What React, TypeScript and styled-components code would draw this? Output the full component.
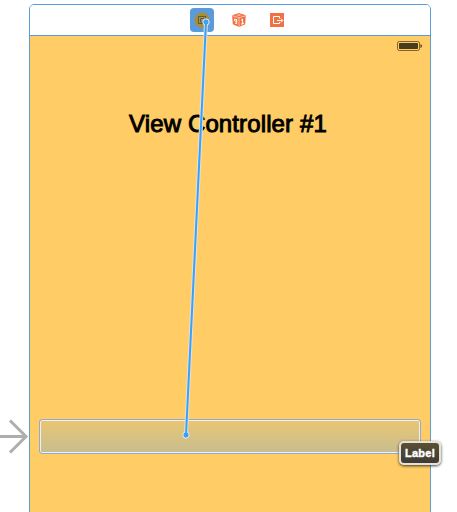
import React from "react";
import styled, { createGlobalStyle } from "styled-components";

const Global = createGlobalStyle`
  * { box-sizing: border-box; }
  body { margin: 0; background: #fff; overflow: hidden; }
`;

const Canvas = styled.main`
  position: relative;
  width: 457px;
  height: 512px;
  padding: 4px 26px 0 29px;
  overflow: hidden;
  background: #fff;
  font-family: "Liberation Sans", Arial, sans-serif;
`;

const Scene = styled.section`
  display: flex;
  flex-direction: column;
  width: 402px;
  height: 520px;
  border: 1px solid #5a9bdc;
  border-radius: 5px 5px 0 0;
  overflow: hidden;
`;

const Dock = styled.header`
  display: flex;
  flex: none;
  gap: 13px;
  height: 31px;
  padding: 3px 0 0 160px;
  border-bottom: 1px solid #5a9bdc;
  background: #fff;
`;

const DockItem = styled.div<{ $selected?: boolean }>`
  display: grid;
  place-items: center;
  width: 24px;
  height: 24px;
  border-radius: 4px;
  background: ${(p) => (p.$selected ? "#5a9bdc" : "transparent")};

  &:last-child { margin-left: 1px; }
`;

const Screen = styled.div`
  display: flex;
  flex: 1;
  flex-direction: column;
  background: #ffcc66;
`;

const StatusBar = styled.div`
  display: flex;
  justify-content: flex-end;
  height: 20px;
  padding: 5px 7px 0 0;
`;

const Title = styled.h1`
  margin: 54px 0 0;
  padding-right: 4px;
  height: 28px;
  font-size: 24px;
  line-height: 28px;
  font-weight: 400;
  letter-spacing: 0.12px;
  text-align: center;
  white-space: nowrap;
  color: #000;
  -webkit-text-stroke: 0.95px #000;
`;

const DropTarget = styled.div`
  height: 35px;
  margin: 281px 9px 0;
  border: 1px solid #8faadb;
  border-radius: 3px;
  background: linear-gradient(#eac671, #c7bd91);
  box-shadow: inset 0 0 0 1px #f2f0eb;
`;

const Overlay = styled.svg`
  position: absolute;
  inset: 0;
`;

const Tooltip = styled.div`
  position: absolute;
  left: 399px;
  top: 441px;
  display: grid;
  place-items: center;
  width: 42px;
  height: 24px;
  border: 2px solid #e6e1d8;
  border-radius: 5px;
  background: linear-gradient(#5b5034, #3f3b35);
  box-shadow: 0 1px 3px rgba(0, 0, 0, 0.75);
  color: #fff;
  font-size: 11px;
  line-height: 14px;
  font-weight: 700;
  letter-spacing: 0.3px;
  -webkit-text-stroke: 0.4px #fff;
`;

const ControllerIcon = () => (
  <svg width="16" height="16" viewBox="0 0 16 16">
    <circle cx="8" cy="8" r="7.5" fill="#ad8d32" />
    <path d="M4.5 4.5H11.5V11.5H4.5Z" fill="#a4975b" stroke="#625b36" strokeWidth="1.1" />
    <path d="M6.5 6.5H10V10H6.5Z" fill="#8795a0" stroke="#625b36" />
  </svg>
);

const ResponderIcon = () => (
  <svg width="16" height="16" viewBox="0 0 16 16">
    <path d="M8 1L14.8 3.2L14.2 12.3L8 15L1.8 12.3L1.1 3.2Z" fill="#f37043" />
    <path d="M1.2 3.7L8 5.7L14.8 3.7M8 5.7V15" fill="none" stroke="#ffe4db" strokeWidth=".7" />
    <path d="M5.2 3.1L8 2.3L10.8 3.1L8 3.9Z" fill="#ffc1aa" />
    <path d="M5.7 7.5L3.7 7V9L5.7 9.5M5.7 7.2V11.7L4 11.1" fill="none" stroke="#fff" />
    <path d="M10.1 8.2L11.5 7.4V11.8M10.1 12.2L12.8 11.3" fill="none" stroke="#fff" strokeWidth="1.1" />
  </svg>
);

const ExitIcon = () => (
  <svg width="14" height="14" viewBox="0 0 14 14">
    <path d="M0 0H14V14H0Z" fill="#f37043" />
    <path d="M9.5 5.5V3.5H3.5V10.5H9.5V9M7 7.5H12.5M10.8 5.5L12.8 7.5L10.8 9.5" fill="none" stroke="#fff" />
  </svg>
);

const Battery = () => (
  <svg width="26" height="10" viewBox="0 0 26 10">
    <rect x=".5" y=".5" width="22" height="9" rx="1.7" fill="none" stroke="#80642e" />
    <rect x="2" y="2" width="19" height="6" rx=".7" fill="#493c1c" />
    <path d="M23.5 3Q25 3.4 25 5Q25 6.6 23.5 7Z" fill="#493c1c" />
  </svg>
);

export default function App() {
  return (
    <>
      <Global />
      <Canvas>
        <Scene>
          <Dock>
            <DockItem $selected><ControllerIcon /></DockItem>
            <DockItem><ResponderIcon /></DockItem>
            <DockItem><ExitIcon /></DockItem>
          </Dock>
          <Screen>
            <StatusBar><Battery /></StatusBar>
            <Title>View Controller #1</Title>
            <DropTarget />
          </Screen>
        </Scene>
        <Overlay width="457" height="512" viewBox="0 0 457 512">
          <path d="M0 436.5H26M10 420.5L26 436.5L10 452.5" fill="none" stroke="#aeaeae" strokeWidth="3" />
          <path d="M206 22L186 435" stroke="#eadfd5" strokeWidth="4" />
          <g fill="#36a3fa" stroke="#f5ede5">
            <circle cx="206" cy="22" r="3.2" />
            <circle cx="186" cy="435" r="3.2" />
          </g>
          <path d="M206 22L186 435" stroke="#36a3fa" strokeWidth="2" />
        </Overlay>
        <Tooltip>Label</Tooltip>
      </Canvas>
    </>
  );
}
